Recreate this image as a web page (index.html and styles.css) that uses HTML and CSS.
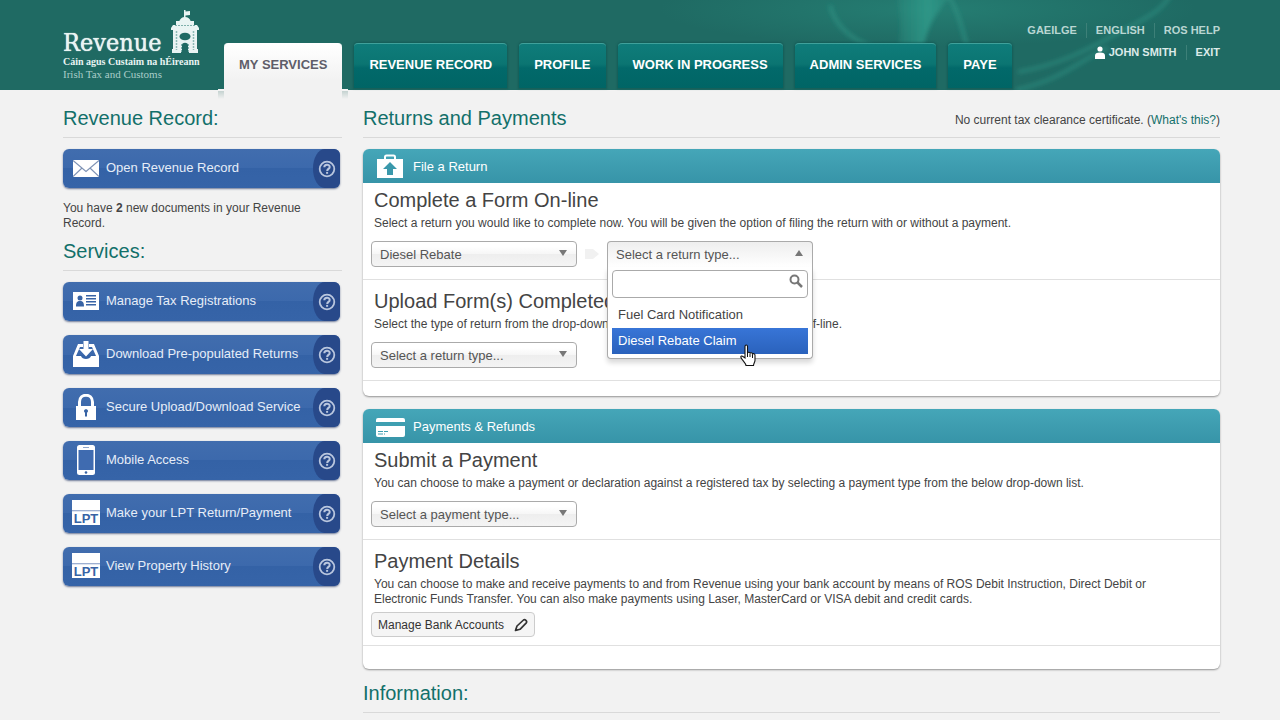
FILE: index.html
```html
<!DOCTYPE html>
<html lang="en">
<head>
<meta charset="UTF-8">
<meta name="viewport" content="width=device-width, initial-scale=1.0">
<title>ROS - My Services</title>
<link rel="stylesheet" href="styles.css">
</head>
<body>

<!-- shared symbols -->
<svg class="symbols" aria-hidden="true">
  <symbol id="help" viewBox="0 0 18 18">
    <circle cx="9" cy="9" r="7.3" fill="none" stroke="currentColor" stroke-width="1.8"/>
    <path d="M6.3 7.3c0-3.4 5.4-3.4 5.4-.4 0 2-2.5 2-2.5 4" fill="none" stroke="currentColor" stroke-width="2"/>
    <rect x="8.1" y="11.9" width="2" height="1.9" fill="currentColor"/>
  </symbol>
</svg>

<header class="header">
  <svg class="swirls" viewBox="0 0 640 90" preserveAspectRatio="none" aria-hidden="true">
    <defs>
      <radialGradient id="haze" cx="0.45" cy="0.1" r="0.42">
        <stop offset="0" stop-color="#2c9585" stop-opacity=".45"/>
        <stop offset="1" stop-color="#2c9585" stop-opacity="0"/>
      </radialGradient>
      <linearGradient id="plume" x1="0" y1="0" x2="1" y2="0">
        <stop offset="0" stop-color="#2f9a8a" stop-opacity=".2"/>
        <stop offset=".55" stop-color="#2f9a8a" stop-opacity=".85"/>
        <stop offset="1" stop-color="#2f9a8a" stop-opacity=".3"/>
      </linearGradient>
      <filter id="soft"><feGaussianBlur stdDeviation="2"/></filter>
    </defs>
    <rect width="640" height="90" fill="url(#haze)"/>
    <g filter="url(#soft)">
      <path d="M257 -5h56c-14 13-26 30-30 55h-26c4-14 4-30 0-55z" fill="url(#plume)"/>
      <path d="M190 5c4 18 16 32 42 42M308 -5c9 14 14 32 20 55" fill="none" stroke="#339c8c" stroke-width="4" opacity=".5"/>
      <path d="M378 72c45-8 72-24 102-40 26-14 40-20 50-36M376 90c50-12 60-28 92-42" fill="none" stroke="#339c8c" stroke-width="4" opacity=".45"/>
    </g>
  </svg>

  <div class="header-inner">
    <a class="logo" href="#">
      <span class="logo-name">Revenue</span>
      <span class="logo-irish">Cáin agus Custaim na hÉireann</span>
      <span class="logo-english">Irish Tax and Customs</span>
      <svg class="logo-gate" viewBox="0 0 28 44" aria-hidden="true">
        <g fill="#e9f4f3">
          <path d="M13 0h1.500v1.500l4.500-.5v4l-4.500.5V9H13z"/>
          <path d="M8 12c1-3.500 3-5 6-5s5 1.500 6 5z"/>
          <path d="M5 11h18v4h3l2 3v2H0v-2l2-3h3z"/>
          <path d="M2 19h24v22H2z"/>
          <path d="M1 39h9v4H1zM18 39h9v4h-9z"/>
        </g>
        <ellipse cx="14" cy="26.500" rx="5.500" ry="3.800" fill="#1f6a64"/>
        <path d="M11 43V35c0-3 6-3 6 0v8z" fill="#1f6a64"/>
        <path d="M5.500 21v19M22.500 21v19" stroke="#8dbab6" stroke-width="1.500" stroke-dasharray="2 1"/>
        <path d="M4 15.500h20M10.500 34v8M17.500 34v8" stroke="#7fb0ac" stroke-width="1" stroke-dasharray="2 1"/>
      </svg>
    </a>

    <nav class="tabs">
      <a class="tab active" href="#">MY SERVICES</a>
      <a class="tab" href="#">REVENUE RECORD</a>
      <a class="tab" href="#">PROFILE</a>
      <a class="tab" href="#">WORK IN PROGRESS</a>
      <a class="tab" href="#">ADMIN SERVICES</a>
      <a class="tab" href="#">PAYE</a>
    </nav>

    <div class="user-links">
      <div class="link-row">
        <a href="#">GAEILGE</a>
        <a href="#">ENGLISH</a>
        <a href="#">ROS HELP</a>
      </div>
      <div class="link-row bright">
        <a href="#"><svg width="10" height="13" viewBox="0 0 10 13" aria-hidden="true"><circle cx="5" cy="3" r="2.600" fill="#fff"/><path d="M0 13V9.500C0 7.500 1.500 6.500 5 6.500s5 1 5 3V13z" fill="#fff"/></svg>JOHN SMITH</a>
        <a href="#">EXIT</a>
      </div>
    </div>
  </div>
</header>

<div class="page">
  <aside class="sidebar">
    <h2>Revenue Record:</h2>
    <div class="service">
      <a class="service-link" href="#">
        <svg width="26" height="26" viewBox="0 0 26 26" aria-hidden="true"><path fill="#fff" d="M0 5h26v17H0z"/><path d="M0 5.500l13 11 13-11M0 21.500l9-8.500M26 21.500L17 13" fill="none" stroke="#7f93b5" stroke-width="1.200"/></svg>
        Open Revenue Record
      </a>
      <button class="help" type="button" aria-label="Help"><svg width="18" height="18"><use href="#help"/></svg></button>
    </div>
    <p class="note">You have <b>2</b> new documents in your Revenue Record.</p>

    <h2>Services:</h2>
    <div class="service-list">
      <div class="service">
        <a class="service-link" href="#">
          <svg width="26" height="26" viewBox="0 0 26 26" aria-hidden="true"><path fill="#fff" d="M0 4h26v18H0z"/><g fill="#3763a5"><circle cx="7" cy="10" r="2.500"/><path d="M3 18.500c0-4 1-5.500 4-5.500s4 1.500 4 5.500zM13 7h10v1.500H13zM13 10h10v1.500H13zM13 13h10v1.500H13zM13 16h10v1.500H13z"/></g></svg>
          Manage Tax Registrations
        </a>
        <button class="help" type="button" aria-label="Help"><svg width="18" height="18"><use href="#help"/></svg></button>
      </div>
      <div class="service">
        <a class="service-link" href="#">
          <svg width="26" height="26" viewBox="0 0 26 26" aria-hidden="true"><path fill="#fff" d="M5 3h5v3H7L3 15h5c1 4 9 4 10 0h5L19 6h-3V3h5l5 12v11H0V15z"/><path fill="#fff" d="M10.500 0h5v8H20l-7 7.500L6 8h4.500z"/></svg>
          Download Pre-populated Returns
        </a>
        <button class="help" type="button" aria-label="Help"><svg width="18" height="18"><use href="#help"/></svg></button>
      </div>
      <div class="service">
        <a class="service-link" href="#">
          <svg width="26" height="26" viewBox="0 0 26 26" aria-hidden="true"><path fill="#fff" d="M3 12h20v14H3z"/><path d="M6.500 13V8c0-9 13-9 13 0v5" fill="none" stroke="#fff" stroke-width="3"/><path fill="#3763a5" d="M11 17c0-2.500 4-2.500 4 0 0 1-1 1.500-1 2v3.500h-2V19c0-.5-1-1-1-2z"/></svg>
          Secure Upload/Download Service
        </a>
        <button class="help" type="button" aria-label="Help"><svg width="18" height="18"><use href="#help"/></svg></button>
      </div>
      <div class="service">
        <a class="service-link" href="#">
          <svg width="26" height="30" viewBox="0 0 26 30" aria-hidden="true"><rect x="4" y="0" width="18" height="30" rx="2.500" fill="#fff"/><path fill="#3f6bb0" d="M5.500 5h15v20h-15z"/><path d="M10 2.500h6" stroke="#8ea6cc"/><circle cx="13" cy="27.500" r="1.300" fill="#3763a5"/></svg>
          Mobile Access
        </a>
        <button class="help" type="button" aria-label="Help"><svg width="18" height="18"><use href="#help"/></svg></button>
      </div>
      <div class="service">
        <a class="service-link" href="#">
          <span class="lpt">LPT</span>
          Make your LPT Return/Payment
        </a>
        <button class="help" type="button" aria-label="Help"><svg width="18" height="18"><use href="#help"/></svg></button>
      </div>
      <div class="service">
        <a class="service-link" href="#">
          <span class="lpt">LPT</span>
          View Property History
        </a>
        <button class="help" type="button" aria-label="Help"><svg width="18" height="18"><use href="#help"/></svg></button>
      </div>
    </div>
  </aside>

  <main class="main">
    <div class="title-row">
      <h2>Returns and Payments</h2>
      <p>No current tax clearance certificate. (<a href="#">What's this?</a>)</p>
    </div>

    <section class="panel">
      <div class="panel-head">
        <svg width="30" height="24" viewBox="0 0 30 24" aria-hidden="true"><path d="M10 6V3c0-1 .5-1.500 1.500-1.500h7C19.500 1.500 20 2 20 3v3" fill="none" stroke="#fff" stroke-width="2"/><path fill="#fff" d="M2 5h26v19H2z"/><path fill="#3a98ab" d="M15 8l7 7h-4v6h-6v-6H8z"/></svg>
        File a Return
      </div>
      <div class="block">
        <h3>Complete a Form On-line</h3>
        <p>Select a return you would like to complete now. You will be given the option of filing the return with or without a payment.</p>
        <div class="fields">
          <div class="pick">
            <select aria-label="Tax type"><option>Diesel Rebate</option></select>
          </div>
          <svg class="next" width="16" height="14" viewBox="0 0 16 14" aria-hidden="true"><path fill="#f1f1f1" d="M1 2h8l6 5-6 5H1z"/></svg>
          <div class="pick open">
            <select aria-label="Return type"><option>Select a return type...</option></select>
            <div class="drop">
              <div class="search">
                <input type="text" aria-label="Search return types">
                <svg width="14" height="14" viewBox="0 0 14 14" aria-hidden="true"><circle cx="5.500" cy="5.500" r="4" fill="none" stroke="#777" stroke-width="2"/><path d="M8.500 8.500l4.500 4.500" stroke="#777" stroke-width="2.500"/></svg>
              </div>
              <ul role="listbox" aria-label="Return types">
                <li role="option">Fuel Card Notification</li>
                <li role="option" aria-selected="true" class="current">Diesel Rebate Claim</li>
              </ul>
              <svg class="cursor" width="17" height="23" viewBox="0 0 17 23" aria-hidden="true"><path d="M5 14V2.500c0-2 2.500-2 2.500 0V9c.3-1.200 2.500-1 2.500.5.500-1.200 2.500-.8 2.500.7.700-1 2.500-.5 2.500 1v5c0 2-1.500 3-1.500 5.300H6c0-2-4-5.500-5-8-.6-1.500 1-2 2-1z" fill="#fff" stroke="#111" stroke-width="1.100"/><path d="M7.500 9v4M10 10v3M12.500 11v3" stroke="#111"/></svg>
            </div>
          </div>
        </div>
      </div>
      <div class="block">
        <h3>Upload Form(s) Completed Off-line</h3>
        <p>Select the type of return from the drop-down list to upload the form(s) completed off-line.</p>
        <div class="fields">
          <div class="pick">
            <select aria-label="Upload return type"><option>Select a return type...</option></select>
          </div>
        </div>
      </div>
    </section>

    <section class="panel tall">
      <div class="panel-head">
        <svg width="30" height="24" viewBox="0 0 30 24" aria-hidden="true"><rect x="1" y="4" width="29" height="19" rx="2" fill="#fff"/><path fill="#3e9fb1" d="M1 8h29v4H1z"/><path d="M3 17.500h10M3 20h7" stroke="#3e9fb1" stroke-dasharray="5 1"/></svg>
        Payments &amp; Refunds
      </div>
      <div class="block">
        <h3>Submit a Payment</h3>
        <p>You can choose to make a payment or declaration against a registered tax by selecting a payment type from the below drop-down list.</p>
        <div class="fields">
          <div class="pick">
            <select aria-label="Payment type"><option>Select a payment type...</option></select>
          </div>
        </div>
      </div>
      <div class="block">
        <h3>Payment Details</h3>
        <p>You can choose to make and receive payments to and from Revenue using your bank account by means of ROS Debit Instruction, Direct Debit or Electronic Funds Transfer. You can also make payments using Laser, MasterCard or VISA debit and credit cards.</p>
        <button class="bank" type="button">Manage Bank Accounts
          <svg width="14" height="14" viewBox="0 0 14 14" aria-hidden="true"><path d="M1.500 12.500L3 8l6.500-6c1.500-1 4 1 2.800 2.800L6 11.300z" fill="none" stroke="#333" stroke-width="1.700" stroke-linejoin="round"/><path d="M1 13l1-3 2 2z" fill="#333"/></svg>
        </button>
      </div>
    </section>

    <div class="title-row">
      <h2>Information:</h2>
    </div>
  </main>
</div>

</body>
</html>
```
FILE: styles.css
```css
* {
  box-sizing: border-box;
}

body {
  margin: 0;
  background: #f2f2f2;
  color: #444;
  font-family: "Liberation Sans", Arial, sans-serif;
  font-size: 12px;
  line-height: 15px;
}

h2, h3, p, ul {
  margin: 0;
  padding: 0;
  font-weight: normal;
}

a {
  color: #12706a;
  text-decoration: none;
}

button, select, input {
  font-family: inherit;
}

.symbols {
  display: none;
}

/* header */
.header {
  position: relative;
  height: 90px;
  background: #1f6a63;
}

.swirls {
  position: absolute;
  top: 0;
  right: 0;
  width: 50%;
  height: 90px;
}

.header-inner {
  position: relative;
  display: flex;
  height: 90px;
  padding: 0 60px 0 63px;
}

.logo {
  position: relative;
  display: flex;
  flex-direction: column;
  flex: none;
  width: 161px;
  padding-top: 30px;
  color: #e9f4f3;
  font-family: "Liberation Serif", serif;
  font-size: 11px;
  line-height: 12px;
  white-space: nowrap;
}

.logo-name {
  font-family: "DejaVu Serif Condensed", "DejaVu Serif", serif;
  font-size: 25px;
  line-height: 26px;
  text-shadow: 0 0 1px #fff;
}

.logo-irish {
  font-size: 10px;
  font-weight: bold;
}

.logo-english {
  color: #a9cdc9;
}

.logo-gate {
  position: absolute;
  left: 108px;
  top: 10px;
  width: 28px;
  height: 44px;
}

.tabs {
  display: flex;
  gap: 12px;
  align-items: flex-start;
  padding-top: 43px;
}

.tab {
  height: 45px;
  padding: 13px 15px 0;
  border-top: 1px solid #3fa19b;
  border-radius: 4px 4px 0 0;
  background: linear-gradient(#0f7c7a 0, #0b7572 20px, #02696a 24px, #006565);
  box-shadow: 0 0 2px 1px rgba(10, 80, 75, .5);
  color: #fff;
  font-size: 13px;
  font-weight: bold;
  white-space: nowrap;
}

.tab.active {
  position: relative;
  height: 55px;
  border-color: #fff;
  background: linear-gradient(#fff, #f2f2f2 36px);
  box-shadow: none;
  color: #5f5e6a;
}

.tab.active::before,
.tab.active::after {
  content: "";
  position: absolute;
  top: 45px;
  width: 6px;
  height: 8px;
  border-top: 2px solid #f4f4f4;
  background: linear-gradient(#c4d2d0, #f2f2f2);
}

.tab.active::before {
  right: 100%;
}

.tab.active::after {
  left: 100%;
}

.user-links {
  display: flex;
  flex-direction: column;
  align-items: flex-end;
  gap: 7px;
  margin-left: auto;
  padding-top: 23px;
}

.link-row {
  display: flex;
}

.link-row a {
  display: flex;
  align-items: center;
  gap: 4px;
  padding-left: 9px;
  color: #b9d6d2;
  font-size: 11px;
  font-weight: bold;
  white-space: nowrap;
}

.link-row a + a {
  margin-left: 9px;
  border-left: 1px solid #3d8078;
}

.link-row.bright a {
  color: #dcebe9;
}

/* page */
.page {
  display: flex;
  gap: 21px;
  padding: 16px 60px 0 63px;
}

.sidebar {
  flex: none;
  width: 279px;
}

.main {
  flex: 1;
}

h2 {
  color: #12706a;
  font-size: 20px;
  line-height: 24px;
}

.sidebar h2,
.title-row {
  margin-bottom: 11px;
  padding-bottom: 7px;
  border-bottom: 1px solid #d9d9d9;
}

.title-row {
  display: flex;
  justify-content: space-between;
  align-items: flex-end;
}

.title-row p {
  line-height: 20px;
}

/* blue buttons */
.service {
  display: flex;
  height: 39px;
  margin-right: 2px;
  border-radius: 6px;
  background: linear-gradient(#416dae, #3c69ac 50%, #3462a6 50%, #3664a8);
  box-shadow: 0 1px 2px rgba(20, 40, 90, .6);
  overflow: hidden;
}

.service-link {
  display: flex;
  flex: 1;
  align-items: center;
  gap: 7px;
  padding: 0 0 2px 10px;
  color: #e6edf8;
  font-size: 13px;
  white-space: nowrap;
}

.service-list {
  display: flex;
  flex-direction: column;
  gap: 14px;
}

.help {
  display: flex;
  align-items: center;
  justify-content: center;
  width: 27px;
  padding: 0;
  border: 0;
  border-radius: 12px 0 0 12px / 20px 0 0 20px;
  background: #28498a;
  color: #b9c6de;
}

.lpt {
  display: flex;
  align-items: flex-end;
  justify-content: center;
  width: 28px;
  height: 25px;
  margin: 0 -1px;
  background: linear-gradient(#fff 10px, #7d95c2 10px, #fff 12px);
  color: #3763a5;
  font-size: 13px;
  font-weight: bold;
  line-height: 13px;
}

.note {
  margin: 13px 0 8px;
}

/* panels */
.panel {
  margin-bottom: 13px;
  padding-bottom: 15px;
  border-radius: 6px;
  background: #fff;
  box-shadow: 0 1px 2px rgba(0, 0, 0, .4);
}

.panel.tall {
  margin-bottom: 12px;
  padding-bottom: 23px;
}

.panel-head {
  display: flex;
  align-items: center;
  gap: 8px;
  height: 34px;
  padding-left: 12px;
  border-radius: 6px 6px 0 0;
  background: linear-gradient(#45a6b8, #3794a8);
  color: #fff;
  font-size: 13px;
}

.block {
  padding: 5px 24px 12px 11px;
  border-bottom: 1px solid #e0e0e0;
}

.block + .block {
  padding-top: 9px;
}

.tall .block:last-child {
  padding-bottom: 8px;
}

h3 {
  margin-bottom: 4px;
  font-size: 20px;
  line-height: 24px;
}

.fields {
  display: flex;
  align-items: center;
  margin: 10px -3px 0;
}

.pick {
  position: relative;
  width: 206px;
}

.pick select {
  display: block;
  width: 100%;
  height: 26px;
  padding: 0 24px 0 8px;
  border: 1px solid #aaa;
  border-radius: 4px;
  appearance: none;
  background: linear-gradient(#fff 20%, #f6f6f6 50%, #eee 52%, #f4f4f4);
  color: #555;
  font-size: 13px;
}

.pick::after {
  content: "";
  position: absolute;
  top: 9px;
  right: 10px;
  border: 4px solid transparent;
  border-top: 6px solid #777;
  border-bottom: 0;
}

.next {
  margin: 0 7px;
}

.pick.open select {
  border-bottom: 0;
  border-radius: 4px 4px 0 0;
  background: linear-gradient(#eee, #fff);
}

.pick.open::after {
  border-top: 0;
  border-bottom: 6px solid #777;
}

.drop {
  position: absolute;
  z-index: 2;
  top: 100%;
  left: 0;
  width: 100%;
  padding: 3px 4px 4px;
  border: 1px solid #aaa;
  border-top: 0;
  border-radius: 0 0 4px 4px;
  background: #fff;
  box-shadow: 0 4px 5px rgba(0, 0, 0, .15);
}

.search {
  position: relative;
  margin-bottom: 4px;
}

.search input {
  display: block;
  width: 100%;
  height: 28px;
  padding: 0 24px 0 5px;
  border: 1px solid #aaa;
  border-radius: 4px;
  background: #fff;
}

.search svg {
  position: absolute;
  top: 4px;
  right: 5px;
}

.drop ul {
  list-style: none;
}

.drop li {
  padding: 0 6px;
  font-size: 13px;
  line-height: 26px;
}

.drop .current {
  background: linear-gradient(#3875d7, #2a62bc);
  color: #fff;
}

.cursor {
  position: absolute;
  left: 132px;
  bottom: -9px;
}

.bank {
  display: flex;
  align-items: center;
  gap: 10px;
  height: 25px;
  margin: 5px -3px 0;
  padding: 0 6px;
  border: 1px solid #ccc;
  border-radius: 4px;
  background: #f5f5f5;
  color: #333;
  font-size: 12px;
}
```
